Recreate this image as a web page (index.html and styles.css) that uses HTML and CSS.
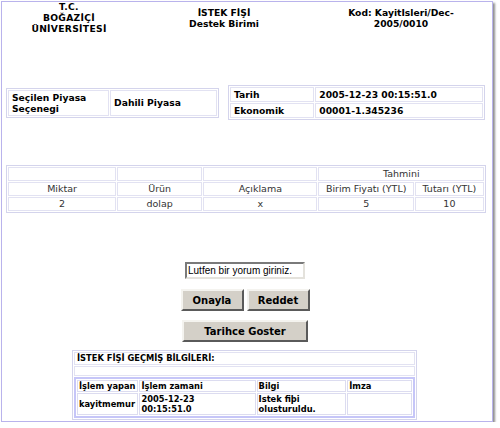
FILE: index.html
```html
<!DOCTYPE html>
<html lang="tr">
<head>
<meta charset="utf-8">
<title>İstek Fişi</title>
<link rel="stylesheet" href="styles.css">
</head>
<body>
<div class="frame">
  <div class="header">
    <div class="hcell">T.C.<br>BOĞAZİÇİ<br>ÜNİVERSİTESİ</div>
    <div class="hcell">İSTEK FİŞİ<br>Destek Birimi</div>
    <div class="hcell">Kod: KayitIsleri/Dec-<br>2005/0010</div>
  </div>

  <div class="info">
    <table class="box piyasa">
      <tr><td class="p1">Seçilen Piyasa<br>Seçenegi</td><td class="p2">Dahili Piyasa</td></tr>
    </table>
    <table class="box tarih">
      <tr><td class="t1">Tarih</td><td class="t2">2005-12-23 00:15:51.0</td></tr>
      <tr><td>Ekonomik</td><td>00001-1.345236</td></tr>
    </table>
  </div>

  <table class="box items">
    <colgroup>
      <col class="i1"><col class="i2"><col class="i3"><col class="i4"><col class="i5">
    </colgroup>
    <tr><td></td><td></td><td></td><td colspan="2">Tahmini</td></tr>
    <tr><td>Miktar</td><td>Ürün</td><td>Açıklama</td><td>Birim Fiyatı (YTL)</td><td>Tutarı (YTL)</td></tr>
    <tr><td>2</td><td>dolap</td><td>x</td><td>5</td><td>10</td></tr>
  </table>

  <div class="actions">
    <input class="comment" type="text" value="Lutfen bir yorum giriniz.">
    <div class="btnrow">
      <button class="btn">Onayla</button>
      <button class="btn">Reddet</button>
    </div>
    <button class="btn wide">Tarihce Goster</button>
  </div>

  <table class="box history">
    <tr><td class="title">İSTEK FİŞİ GEÇMİŞ BİLGİLERİ:</td></tr>
    <tr><td class="empty"></td></tr>
    <tr><td class="holder">
      <table class="log">
        <colgroup>
          <col class="l1"><col class="l2"><col class="l3"><col class="l4">
        </colgroup>
        <tr><td class="nw">İşlem yapan</td><td>İşlem zamani</td><td>Bilgi</td><td>İmza</td></tr>
        <tr><td class="nw">kayitmemur</td><td>2005-12-23<br>00:15:51.0</td><td>Istek fiþi<br>olusturuldu.</td><td></td></tr>
      </table>
    </td></tr>
  </table>
</div>
</body>
</html>
```

FILE: styles.css
```css
html, body {
  margin: 0;
  background: #ffffff;
}

body {
  font-family: "DejaVu Sans", Verdana, sans-serif;
  font-size: 9.2px;
  color: #000;
}

.frame {
  margin: 1px 0 0 1px;
  width: 480px;
  height: 419px;
  padding: 0 6px 0 4px;
  border: 1px solid #b9b3ec;
  box-shadow: 2px 2px 2px rgba(70, 70, 70, 0.6);
  overflow: hidden;
}

.header {
  display: grid;
  grid-template-columns: 126px 184px 1fr;
  align-items: center;
  text-align: center;
  font-weight: bold;
  line-height: 11px;
  margin-top: -1px;
}

.header .hcell:first-child {
  letter-spacing: 0.3px;
}

.info {
  display: flex;
  justify-content: space-between;
  align-items: center;
  margin-top: 51px;
  padding-right: 1px;
}

table.box {
  border: 1px solid #d4d4ec;
  border-spacing: 1px;
}

table.box td {
  border: 1px solid #e2e2f2;
  padding: 1px 3px;
  line-height: 11px;
}

.piyasa, .tarih {
  font-weight: bold;
  table-layout: fixed;
}

.piyasa { width: 213px; }
.p1 { width: 48.5%; }
.p2 { width: 51.5%; }

.tarih { width: 257px; }
.t1 { width: 32.4%; }
.t2 { width: 67.6%; }

.items {
  width: 100%;
  margin-top: 45px;
  table-layout: fixed;
  font-size: 9.5px;
}

.i1 { width: 22.9%; }
.i2 { width: 18.05%; }
.i3 { width: 24.2%; }
.i4 { width: 20.2%; }
.i5 { width: 14.65%; }

table.items td {
  text-align: center;
  padding: 0 2px;
  line-height: 12px;
  color: #333;
  white-space: nowrap;
}

.actions {
  display: flex;
  flex-direction: column;
  align-items: center;
  margin-top: 49px;
  padding-right: 2px;
}

.comment {
  box-sizing: border-box;
  width: 120px;
  height: 17px;
  margin: 0;
  padding: 0 1px;
  border: 2px solid;
  border-color: #7a7a7a #e4e2dc #e4e2dc #7a7a7a;
  font-family: "Liberation Sans", Arial, sans-serif;
  font-size: 10px;
  color: #000;
  background: #fff;
  outline: none;
}

.btnrow {
  display: flex;
  gap: 3px;
  margin-top: 10px;
}

.btn {
  box-sizing: border-box;
  width: 63px;
  height: 22px;
  margin: 0;
  padding: 0;
  background: #d4d0c8;
  border: 2px solid;
  border-color: #f4f3ef #5a5a5a #5a5a5a #f4f3ef;
  font-family: "DejaVu Sans", Verdana, sans-serif;
  font-size: 10px;
  font-weight: bold;
  color: #000;
}

.wide {
  width: 126px;
  margin-top: 9px;
}

.history {
  width: 345px;
  margin: 8px 0 0 66px;
  font-size: 8.3px;
}

table.history td.title {
  font-weight: bold;
  padding: 0 2px;
}

table.history td.empty {
  height: 8px;
  padding: 0;
  line-height: 8px;
}

table.history td.holder {
  border: 0;
  padding: 0;
}

.log {
  width: 100%;
  border: 2px solid #c6c6f8;
  border-spacing: 1px;
  table-layout: fixed;
  font-weight: bold;
}

.l1 { width: 18.5%; }
.l2 { width: 35%; }
.l3 { width: 27%; }
.l4 { width: 19.5%; }

table.history .log td {
  border: 1px solid #dcdcf0;
  padding: 0 1px;
  line-height: 10px;
  vertical-align: middle;
}

table.history .log td.nw {
  white-space: nowrap;
}
```
